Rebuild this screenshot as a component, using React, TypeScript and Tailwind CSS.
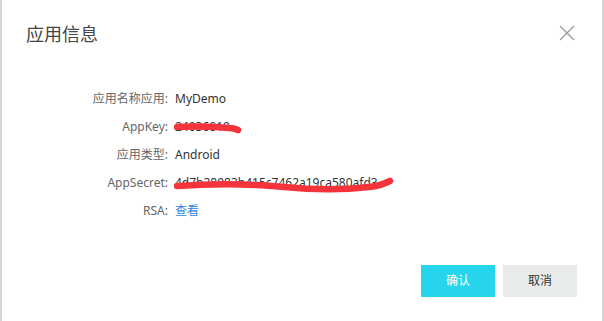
import React from "react";

const rows = [
  { label: "应用名称应用:", value: "MyDemo" },
  { label: "AppKey:", value: "24036019", scribble: "key" },
  { label: "应用类型:", value: "Android" },
  { label: "AppSecret:", value: "4d7b28983b415c7462a19ca580afd3", scribble: "secret" },
  { label: "RSA:", value: "查看", link: true },
];

function Scribble({ kind }: { kind: string }) {
  if (kind === "key") {
    return (
      <svg className="absolute left-[-1px] top-0 pointer-events-none" width="70" height="28" viewBox="0 0 70 28">
        <path d="M3 14 C 20 13, 40 14, 55 15 C 60 15, 62 16, 64 17" stroke="#f5333b" strokeWidth="6.5" strokeLinecap="round" fill="none" />
      </svg>
    );
  }
  return (
    <svg className="absolute left-[-1px] top-0 pointer-events-none" width="225" height="28" viewBox="0 0 225 28">
      <path d="M3 17 C 30 15, 70 14, 110 18 C 140 21, 170 21, 195 18 C 205 17, 212 14, 216 12" stroke="#f5333b" strokeWidth="6.5" strokeLinecap="round" fill="none" />
    </svg>
  );
}

export default function App() {
  return (
    <div className="w-[604px] h-[321px] flex bg-white" style={{ fontFamily: '"Noto Sans", "Noto Sans CJK SC", sans-serif' }}>
      <div className="w-[2px] bg-[#d6d6d6]" />
      <div className="flex-1 flex flex-col bg-white">
        {/* header */}
        <div className="flex items-center justify-between pt-[22px] pl-[24px] pr-[27px]">
          <div className="text-[18px] leading-[24px] text-[#444]">应用信息</div>
          <svg width="16" height="16" viewBox="0 0 16 16" className="mt-[-2px]">
            <path d="M1 1 L15 15 M15 1 L1 15" stroke="#9a9a9a" strokeWidth="1.3" />
          </svg>
        </div>
        {/* body */}
        <div className="mt-[39px] flex flex-col">
          {rows.map((r) => (
            <div key={r.label} className="h-[28px] flex items-center text-[12px]">
              <div className="w-[166px] text-right text-[#666]">{r.label}</div>
              <div className={`relative ml-[7px] h-[28px] flex items-center ${r.link ? "text-[#2f87e0]" : "text-[#333]"}`}>
                <span>{r.value}</span>
                {r.scribble && <Scribble kind={r.scribble} />}
              </div>
            </div>
          ))}
        </div>
        {/* footer */}
        <div className="mt-[40px] flex justify-end gap-[8px] pr-[25px]">
          <button className="w-[74px] h-[32px] bg-[#26d4ec] text-white text-[12px]">确认</button>
          <button className="w-[74px] h-[32px] bg-[#e9ebeb] text-[#333] text-[12px]">取消</button>
        </div>
      </div>
      <div className="w-[2px] bg-[#d6d6d6]" />
    </div>
  );
}
